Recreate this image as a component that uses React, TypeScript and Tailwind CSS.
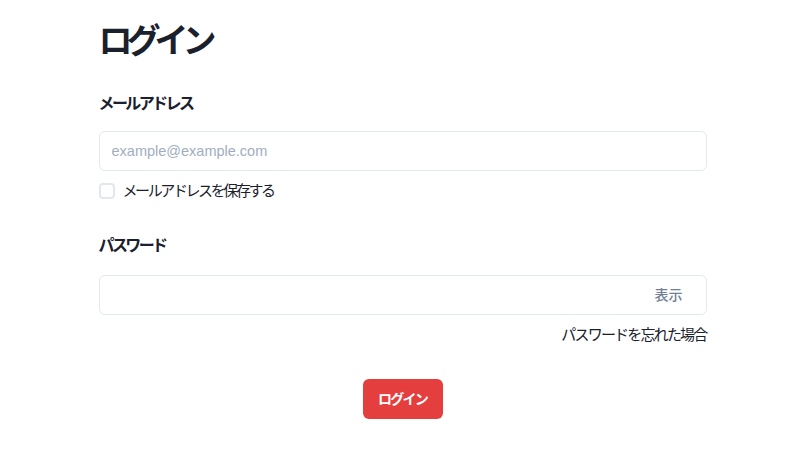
export default function App() {
  return (
    <div className="min-h-screen bg-white" style={{ fontFamily: '"Liberation Sans", "Noto Sans CJK JP", sans-serif' }}>
      <div className="mx-auto w-[608px] pt-[17px]">
        <h1 className="text-[34px] font-bold leading-[48px] tracking-[-6px] text-[#1a202c]">ログイン</h1>

        {/* Email */}
        <div className="mt-[27px]">
          <label className="block text-[16px] font-bold leading-6 tracking-[-2.6px] text-[#1a202c]">メールアドレス</label>
          <input
            type="email"
            placeholder="example@example.com"
            className="mt-[15px] h-10 w-full rounded-md border border-[#e2e8f0] px-3 text-[14.5px] text-[#1a202c] outline-none placeholder:text-[#a0aec0]"
          />
          <label className="mt-[8px] flex items-center gap-2 text-[15px] leading-6 text-[#1a202c]">
            <span className="h-4 w-4 rounded-sm border-2 border-[#e2e8f0]" />
            <span className="tracking-[-2.4px]">メールアドレスを保存する</span>
          </label>
        </div>

        {/* Password */}
        <div className="mt-[31px]">
          <label className="block text-[16px] font-bold leading-6 tracking-[-2.6px] text-[#1a202c]">パスワード</label>
          <div className="mt-[17px] flex h-10 items-center rounded-md border border-[#e2e8f0] pr-[23px]">
            <input type="password" className="h-full flex-1 rounded-md px-3 outline-none" />
            <span className="text-[14px] font-medium text-[#718096]">表示</span>
          </div>
          <div className="mt-[8px] text-right text-[15px] leading-6 tracking-[-1.8px] text-[#1a202c]">パスワードを忘れた場合</div>
        </div>

        <div className="mt-[32px] flex justify-center">
          <button className="h-10 w-20 rounded-md bg-[#e53e3e] text-[14px] font-bold tracking-[-1.7px] text-white">ログイン</button>
        </div>
      </div>
    </div>
  )
}
